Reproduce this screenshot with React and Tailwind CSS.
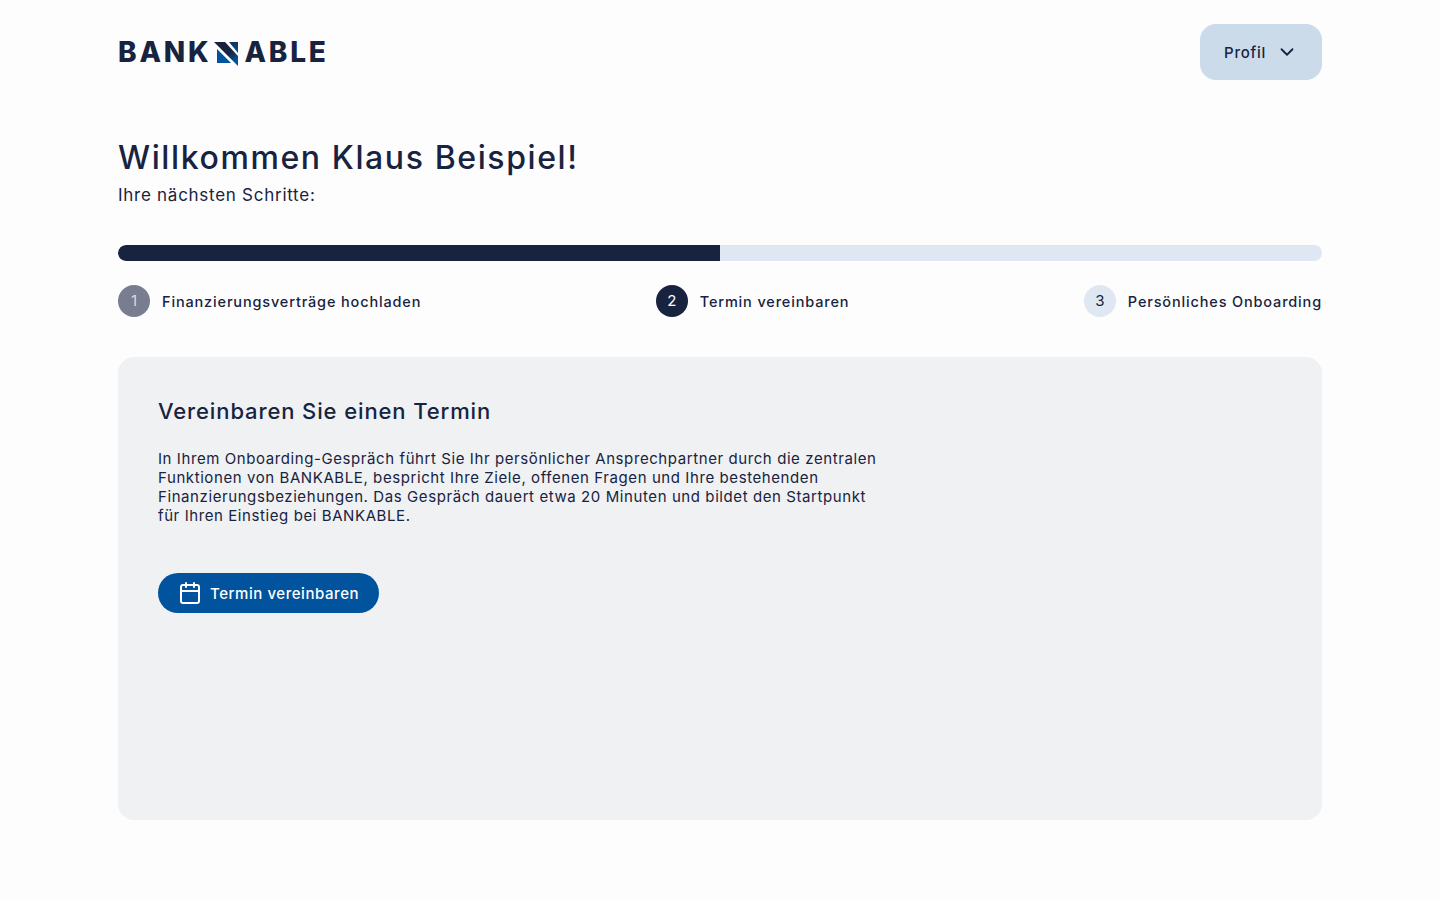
import { ChevronDown } from "lucide-react";

const font = "font-['Inter',sans-serif]";

const steps = [
  { n: 1, label: "Finanzierungsverträge hochladen", badge: "bg-[#787e8f] text-[#d9dce2]" },
  { n: 2, label: "Termin vereinbaren", badge: "bg-[#18233f] text-white" },
  { n: 3, label: "Persönliches Onboarding", badge: "bg-[#dfe8f2] text-[#18233f]" },
];

const Logo = () => (
  <div className="flex items-center font-['Inter',sans-serif] text-[28px] leading-none font-extrabold tracking-[0.1em] text-[#18233f]">
    <span>BANK</span>
    <svg viewBox="0 0 24 24" className="mt-[3px] mr-[6px] ml-[3px] h-[24px] w-[24px]">
      <defs>
        <linearGradient id="band" x1="0" y1="0" x2="1" y2="1">
          <stop offset="0.55" stopColor="#18233f" />
          <stop offset="0.85" stopColor="#00539c" />
        </linearGradient>
        <linearGradient id="side" x1="0" y1="0" x2="0" y2="1">
          <stop offset="0" stopColor="#12325f" />
          <stop offset="1" stopColor="#00539c" />
        </linearGradient>
      </defs>
      <path d="M0 0H11L24 14V24Z" fill="url(#band)" />
      <path d="M15 0H24V11Z" fill="url(#side)" />
      <path d="M3 7V21H17Z" fill="#00539c" />
    </svg>
    <span>ABLE</span>
  </div>
);

const Step = ({ n, label, badge }) => (
  <div className="flex items-center gap-3">
    <span className={`flex h-8 w-8 items-center justify-center rounded-full text-[15px] font-normal ${badge}`}>{n}</span>
    <span className="pt-px text-[14.5px] font-medium tracking-[0.058em] text-[#18233f]">{label}</span>
  </div>
);

export default function App() {
  return (
    <div className={`min-h-[900px] bg-[#fdfdfe] px-[118px] ${font} text-[#18233f]`}>
      <header className="flex items-center justify-between pt-6">
        <Logo />
        <button className="flex h-14 w-[122px] items-center justify-start gap-[10px] rounded-2xl bg-[#cbdbea] pl-6 text-[15px] font-medium tracking-[0.052em]">
          <span className="pt-[2px]">Profil</span>
          <ChevronDown size={22} strokeWidth={2} />
        </button>
      </header>

      <h1 className="mt-[57px] text-[32px] leading-[42px] font-medium tracking-[0.05em]">Willkommen Klaus Beispiel!</h1>
      <p className="mt-[4px] text-[17px] leading-[24px] tracking-[0.043em]">Ihre nächsten Schritte:</p>

      <div className="mt-[38px] h-4 overflow-hidden rounded-full bg-[#dfe8f2]">
        <div className="h-full w-1/2 rounded-l-full bg-[#18233f]" />
      </div>

      <div className="mt-6 flex justify-between">
        {steps.map((s) => (
          <Step key={s.n} {...s} />
        ))}
      </div>

      <section className="mt-10 h-[463px] rounded-2xl bg-[#eff1f3] px-10 pt-[38px]">
        <h2 className="text-[22px] leading-[32px] font-medium tracking-[0.04em]">Vereinbaren Sie einen Termin</h2>
        <p className="mt-[22px] w-[730px] text-[15px] leading-[19px] tracking-[0.039em]">
          In Ihrem Onboarding-Gespräch führt Sie Ihr persönlicher Ansprechpartner durch die zentralen Funktionen von BANKABLE, bespricht Ihre Ziele, offenen Fragen und Ihre bestehenden Finanzierungsbeziehungen. Das Gespräch dauert etwa 20 Minuten und bildet den Startpunkt für Ihren Einstieg bei BANKABLE.
        </p>
        <button className="mt-[48px] flex h-10 items-center gap-[8px] rounded-full bg-[#00539c] px-5 text-[15px] font-medium tracking-[0.037em] text-white">
          <svg width="24" height="24" viewBox="0 0 24 24" fill="none" stroke="currentColor" strokeWidth="2" strokeLinecap="round" strokeLinejoin="round">
            <rect x="3" y="4" width="18" height="18" rx="2" />
            <path d="M3 10h18M8 2v4M16 2v4" />
          </svg>
          <span className="pt-[2px]">Termin vereinbaren</span>
        </button>
      </section>
    </div>
  );
}
